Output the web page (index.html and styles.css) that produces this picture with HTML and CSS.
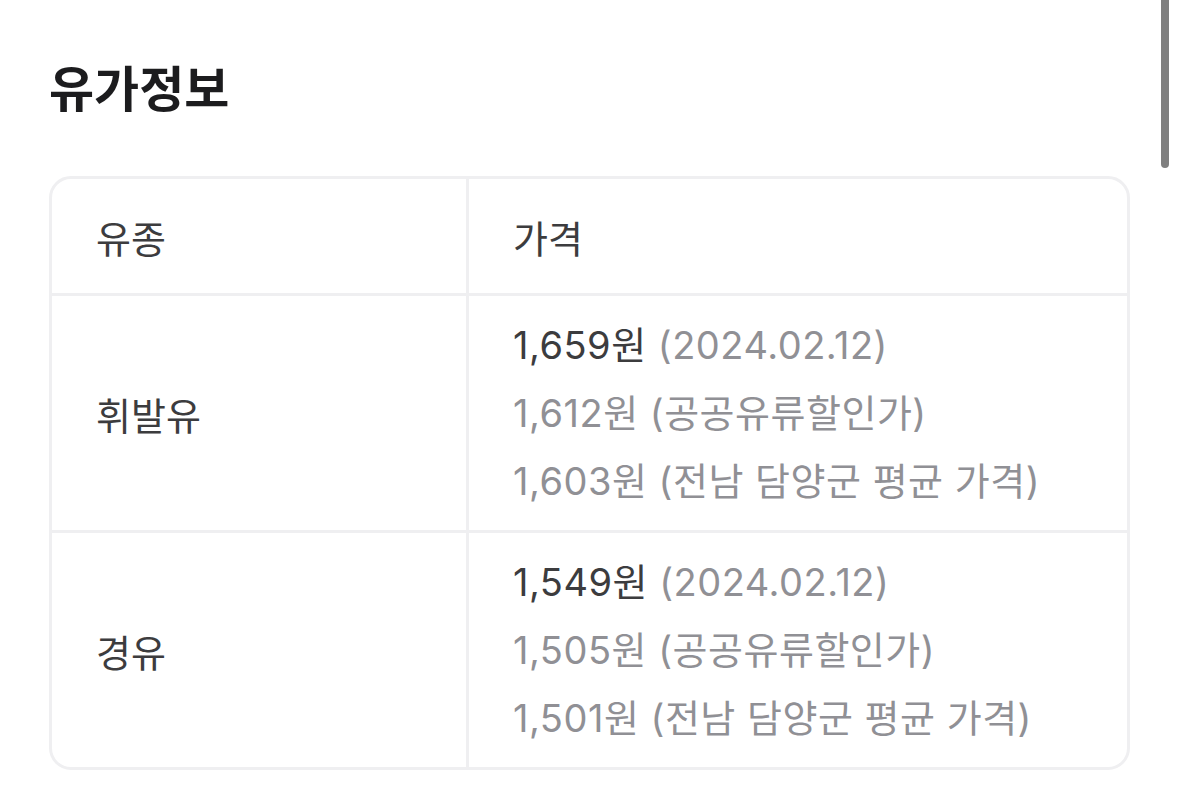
FILE: index.html
```html
<!DOCTYPE html>
<html lang="ko">

<head>
  <meta charset="UTF-8">
  <meta name="viewport" content="width=device-width, initial-scale=1.0">
  <title>유가정보</title>
  <link rel="stylesheet" href="styles.css">
</head>

<body>
  <div class="scrollbar"></div>
  <section class="oil">
    <h1>유가정보</h1>
    <div class="price-table">
      <div class="row head">
        <div class="cell name">유종</div>
        <div class="cell price">가격</div>
      </div>
      <div class="row">
        <div class="cell name">휘발유</div>
        <div class="cell price">
          <p class="line"><span class="now">1,659원</span> (2024.02.12)</p>
          <p class="line">1,612원 (공공유류할인가)</p>
          <p class="line">1,603원 (전남 담양군 평균 가격)</p>
        </div>
      </div>
      <div class="row last">
        <div class="cell name">경유</div>
        <div class="cell price">
          <p class="line"><span class="now">1,549원</span> (2024.02.12)</p>
          <p class="line">1,505원 (공공유류할인가)</p>
          <p class="line">1,501원 (전남 담양군 평균 가격)</p>
        </div>
      </div>
    </div>
  </section>
</body>

</html>
```

FILE: styles.css
```css
body {
  font-family: Inter, "Noto Sans CJK KR", "Noto Sans", sans-serif;
  background-color: #fff;
  color: #1c1c1e;
  margin: 0;
  padding: 0;
}

.oil {
  padding: 52px 49px 40px 49px;
}

h1 {
  font-size: 49px;
  font-weight: 700;
  line-height: 76px;
  margin: 0 0 48px 0;
}

.price-table {
  border: 3px solid #efeff1;
  border-radius: 22px;
  overflow: hidden;
}

.row {
  display: grid;
  grid-template-columns: 414px 1fr;
  border-bottom: 3px solid #efeff1;
}

.row.last {
  border-bottom: 0;
}

.cell {
  display: flex;
  flex-direction: column;
  justify-content: center;
  padding: 15px 0 15px 44px;
  font-size: 38px;
  color: #3c3c3e;
}

.cell.price {
  border-left: 3px solid #efeff1;
  padding-left: 44px;
  color: #909095;
}

.head .cell {
  height: 84px;
  color: #3c3c3e;
}

.line {
  margin: 0;
  line-height: 68px;
  letter-spacing: 0.5px;
}

.now {
  color: #3c3c3e;
}

.scrollbar {
  position: fixed;
  top: 0;
  right: 10px;
  width: 8px;
  height: 168px;
  background-color: #7f7f7f;
  border-radius: 0 0 4px 4px;
}
```
